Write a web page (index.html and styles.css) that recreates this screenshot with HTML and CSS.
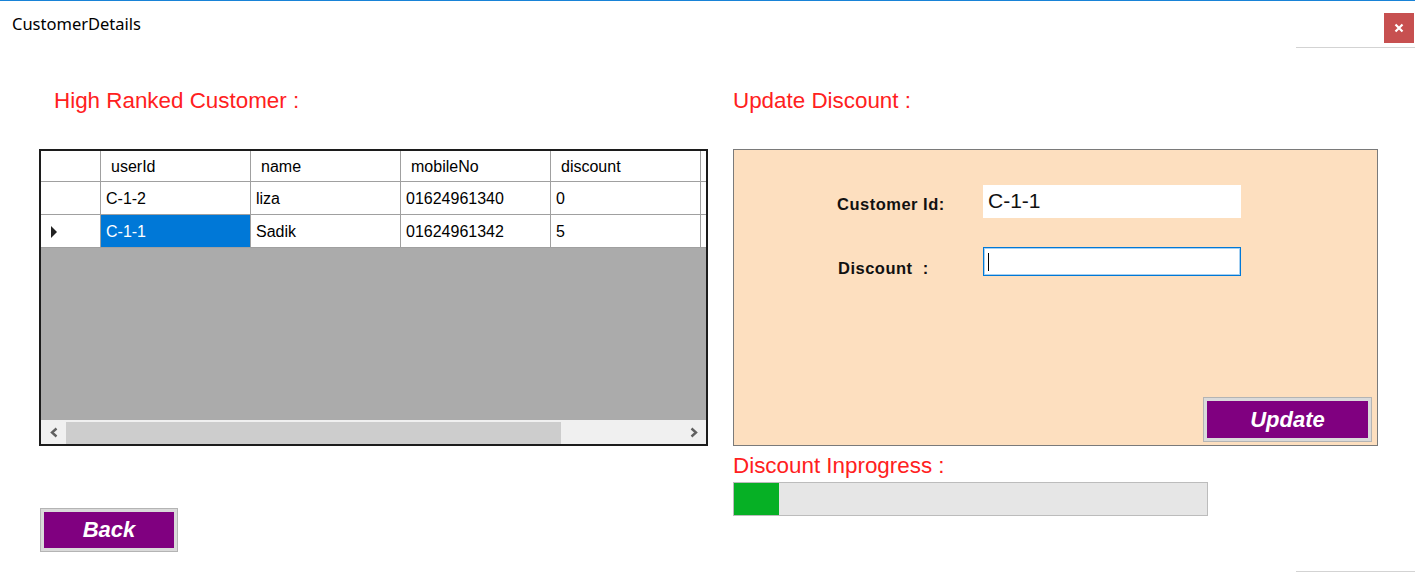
FILE: index.html
```html
<!DOCTYPE html>
<html>
<head>
<meta charset="utf-8">
<title>CustomerDetails</title>
<link rel="stylesheet" href="styles.css">
</head>
<body>
<div class="window">
  <div class="titlebar">
    <span class="title">CustomerDetails</span>
    <div class="ctrl">
      <div class="close">
        <svg width="10" height="10" viewBox="0 0 10 10"><path d="M1.5 1.5 L8.5 8.5 M8.5 1.5 L1.5 8.5" stroke="#fff" stroke-width="2.2" fill="none"/></svg>
      </div>
    </div>
  </div>
  <div class="content">
    <section class="left">
      <h2 class="heading">High Ranked Customer :</h2>
      <div class="dgv">
        <div class="row head">
          <div class="cell rh"></div>
          <div class="cell hc">userId</div>
          <div class="cell hc">name</div>
          <div class="cell hc">mobileNo</div>
          <div class="cell hc">discount</div>
          <div class="cell fill-cell"></div>
        </div>
        <div class="row data">
          <div class="cell rh"></div>
          <div class="cell">C-1-2</div>
          <div class="cell">liza</div>
          <div class="cell">01624961340</div>
          <div class="cell">0</div>
          <div class="cell fill-cell"></div>
        </div>
        <div class="row data">
          <div class="cell rh"><span class="tri"></span></div>
          <div class="cell sel">C-1-1</div>
          <div class="cell">Sadik</div>
          <div class="cell">01624961342</div>
          <div class="cell">5</div>
          <div class="cell fill-cell"></div>
        </div>
        <div class="empty"></div>
        <div class="hscroll">
          <div class="arrow">
            <svg width="10" height="11" viewBox="0 0 10 11"><path d="M7.5 1.5 L3 5.5 L7.5 9.5" stroke="#606060" stroke-width="2.4" fill="none"/></svg>
          </div>
          <div class="thumb"></div>
          <div class="track"></div>
          <div class="arrow">
            <svg width="10" height="11" viewBox="0 0 10 11"><path d="M2.5 1.5 L7 5.5 L2.5 9.5" stroke="#606060" stroke-width="2.4" fill="none"/></svg>
          </div>
        </div>
      </div>
      <button class="btn back">Back</button>
    </section>
    <section class="right">
      <h2 class="heading">Update Discount :</h2>
      <div class="panel">
        <div class="form">
          <label class="lbl lbl1">Customer Id:</label>
          <div class="idbox">C-1-1</div>
          <label class="lbl lbl2">Discount&nbsp; :</label>
          <div class="input"><span class="caret"></span></div>
        </div>
        <button class="btn update">Update</button>
      </div>
      <h2 class="heading prog-title">Discount Inprogress :</h2>
      <div class="progress"><div class="bar" style="width:9.5%"></div></div>
    </section>
  </div>
  <div class="footer"><div class="fline"></div></div>
</div>
</body>
</html>
```

FILE: styles.css
```css
html, body {
  margin: 0;
  padding: 0;
  background: #fff;
}
body {
  width: 1415px;
  height: 572px;
  overflow: hidden;
  font-family: "Liberation Sans", Arial, sans-serif;
}
.window {
  height: 572px;
  box-sizing: border-box;
  border-top: 1px solid #1883d7;
  display: flex;
  flex-direction: column;
}
.titlebar {
  height: 47px;
  display: flex;
  justify-content: space-between;
  flex-shrink: 0;
}
.title {
  font-family: "Noto Sans", "Open Sans", sans-serif;
  font-size: 16.5px;
  color: #000;
  padding-left: 12px;
  line-height: 20px;
  margin-top: 13px;
}
.ctrl {
  width: 119px;
  height: 47px;
  box-sizing: border-box;
  border-bottom: 1px solid #d3d3d3;
  display: flex;
  justify-content: flex-end;
  align-items: flex-start;
}
.close {
  width: 30px;
  height: 30px;
  margin-top: 12px;
  margin-right: 1px;
  background: #c75050;
  display: flex;
  align-items: center;
  justify-content: center;
}
.content {
  flex: 1;
  display: flex;
  gap: 25px;
  padding-left: 39px;
}
.heading {
  margin: 41px 0 0 0;
  font-family: "Liberation Sans", Arial, sans-serif;
  font-weight: normal;
  font-size: 22.4px;
  line-height: 24px;
  color: #ff2020;
}
.left {
  width: 669px;
  display: flex;
  flex-direction: column;
}
.left .heading {
  margin-left: 15px;
}
.dgv {
  margin-top: 36px;
  height: 297px;
  box-sizing: border-box;
  border: 2px solid #1c1c1c;
  display: flex;
  flex-direction: column;
  background: #ababab;
}
.row {
  display: grid;
  grid-template-columns: 60px 150px 150px 150px 150px 1fr;
  background: #fff;
}
.row.head {
  height: 31px;
}
.row.data {
  height: 33px;
}
.cell {
  box-sizing: border-box;
  border-right: 1px solid #a0a0a0;
  border-bottom: 1px solid #a0a0a0;
  font-size: 16px;
  color: #000;
  padding-left: 5px;
  padding-top: 2px;
  display: flex;
  align-items: center;
  white-space: nowrap;
}
.cell.hc {
  padding-left: 10px;
}
.cell.fill-cell {
  border-right: none;
}
.cell.rh {
  padding-left: 10px;
}
.cell.sel {
  background: #0078d7;
  color: #fff;
}
.tri {
  width: 0;
  height: 0;
  border-top: 6px solid transparent;
  border-bottom: 6px solid transparent;
  border-left: 6px solid #222;
}
.empty {
  flex: 1;
  background: #ababab;
}
.hscroll {
  height: 24px;
  background: #f0f0f0;
  display: flex;
}
.arrow {
  width: 25px;
  display: flex;
  align-items: center;
  justify-content: center;
}
.thumb {
  width: 495px;
  margin-top: 2px;
  background: #cdcdcd;
}
.track {
  flex: 1;
}
.btn {
  font-family: "Liberation Sans", Arial, sans-serif;
  font-size: 22px;
  font-weight: bold;
  font-style: italic;
  color: #fff;
  background: #800080;
  border: 1px solid #b4b4b4;
  box-shadow: inset 0 0 0 3px #dadada;
  padding: 0;
  cursor: pointer;
}
.back {
  margin-top: 62px;
  margin-left: 1px;
  width: 138px;
  height: 44px;
}
.right {
  width: 645px;
  display: flex;
  flex-direction: column;
}
.panel {
  margin-top: 36px;
  height: 297px;
  box-sizing: border-box;
  border: 1px solid #7a7a7a;
  background: #fddfbf;
  display: flex;
  flex-direction: column;
}
.form {
  display: grid;
  grid-template-columns: 146px 258px;
  grid-template-rows: 33px 29px;
  row-gap: 29px;
  margin-top: 35px;
  margin-left: 103px;
}
.lbl {
  font-family: "Liberation Sans", Arial, sans-serif;
  font-weight: bold;
  font-size: 16.5px;
  line-height: 20px;
  letter-spacing: 0.5px;
  color: #111;
  align-self: start;
}
.lbl1 {
  padding-top: 9px;
}
.lbl2 {
  padding-top: 11px;
  padding-left: 1px;
}
.idbox {
  background: #fff;
  font-size: 21px;
  line-height: 31px;
  padding-left: 5px;
  color: #111;
}
.input {
  background: #fff;
  box-sizing: border-box;
  border: 1px solid #0078d7;
  box-shadow: inset 0 0 0 1px rgba(0, 120, 215, 0.35);
  display: flex;
  align-items: center;
  padding-left: 4px;
}
.caret {
  width: 1px;
  height: 18px;
  background: #000;
}
.update {
  margin-top: auto;
  align-self: flex-end;
  margin-right: 5px;
  margin-bottom: 3px;
  width: 169px;
  height: 45px;
}
.prog-title {
  margin-top: 8px;
}
.progress {
  margin-top: 4px;
  width: 475px;
  height: 34px;
  box-sizing: border-box;
  border: 1px solid #bcbcbc;
  background: #e6e6e6;
}
.bar {
  height: 100%;
  background: #06b025;
}
.footer {
  height: 1px;
  display: flex;
  justify-content: flex-end;
  flex-shrink: 0;
}
.fline {
  width: 119px;
  height: 1px;
  background: #d3d3d3;
}
```
